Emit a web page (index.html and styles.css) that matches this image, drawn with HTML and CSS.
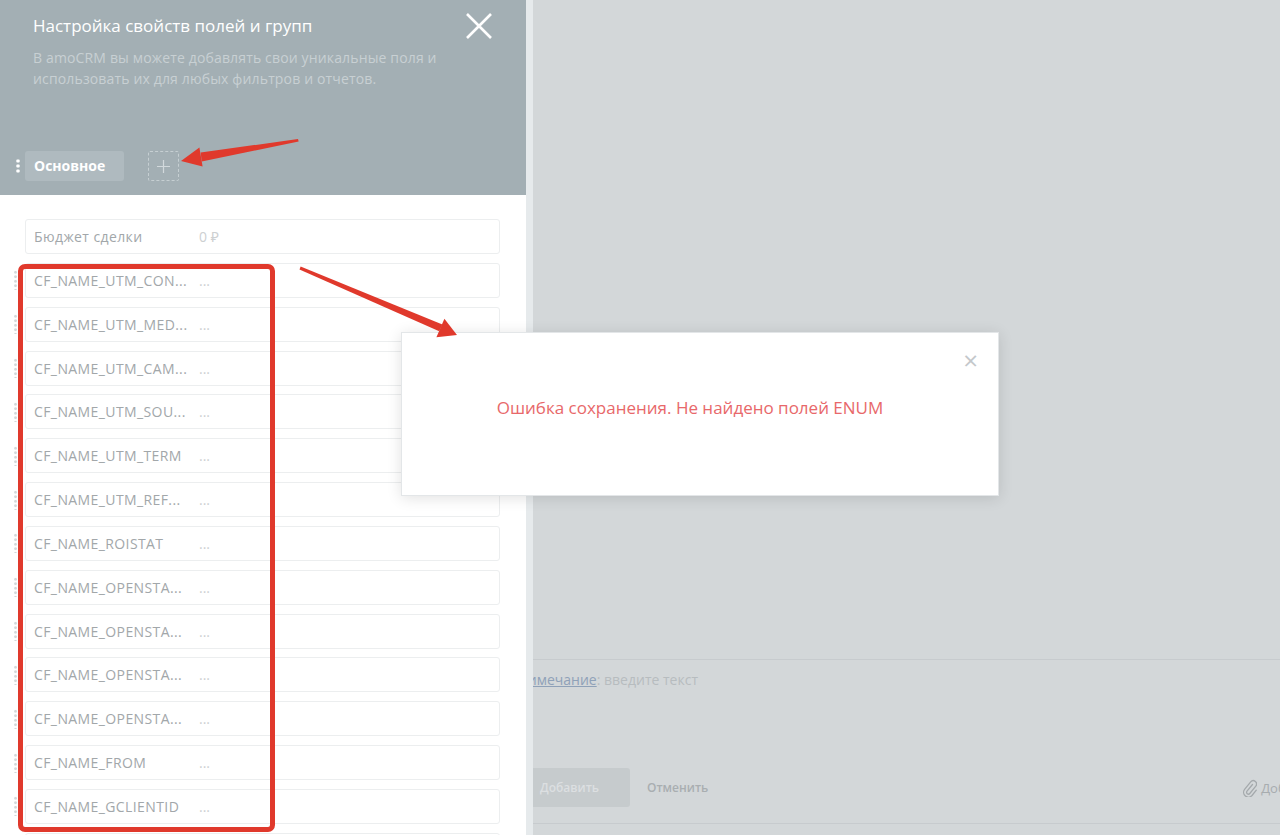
FILE: index.html
```html
<!DOCTYPE html>
<html lang="ru">
<head>
    <meta charset="UTF-8">
    <meta name="viewport" content="width=device-width, initial-scale=1.0">
    <title>Настройка свойств полей и групп</title>
    <link rel="stylesheet" href="styles.css">
</head>
<body>
    <div class="layout">
        <aside class="panel">
            <div class="panel-head">
                <div class="head-top">
                    <h1>Настройка свойств полей и групп</h1>
                    <button class="close" type="button" aria-label="Закрыть">
                        <svg width="26" height="26" viewBox="0 0 26 26"><path d="M1 1L25 25M25 1L1 25" stroke="#fff" stroke-width="2.6"/></svg>
                    </button>
                </div>
                <p class="lead">В amoCRM вы можете добавлять свои уникальные поля и использовать их для любых фильтров и отчетов.</p>
                <div class="tabs">
                    <span class="tab-dots"></span>
                    <span class="tab">Основное</span>
                    <span class="tab-add">
                        <svg width="13" height="13" viewBox="0 0 13 13"><path d="M6.5 0V13M0 6.5H13" stroke="#d2d9dc" stroke-width="1.2"/></svg>
                    </span>
                </div>
            </div>

            <div class="fields">
                <div class="field">
                    <span class="grip hidden"></span>
                    <div class="field-box"><span class="field-name">Бюджет сделки</span><span class="field-value">0 ₽</span></div>
                </div>
                <div class="field">
                    <span class="grip"></span>
                    <div class="field-box"><span class="field-name">CF_NAME_UTM_CON...</span><span class="field-value">...</span></div>
                </div>
                <div class="field">
                    <span class="grip"></span>
                    <div class="field-box"><span class="field-name">CF_NAME_UTM_MED...</span><span class="field-value">...</span></div>
                </div>
                <div class="field">
                    <span class="grip"></span>
                    <div class="field-box"><span class="field-name">CF_NAME_UTM_CAM...</span><span class="field-value">...</span></div>
                </div>
                <div class="field">
                    <span class="grip"></span>
                    <div class="field-box"><span class="field-name">CF_NAME_UTM_SOU...</span><span class="field-value">...</span></div>
                </div>
                <div class="field">
                    <span class="grip"></span>
                    <div class="field-box"><span class="field-name">CF_NAME_UTM_TERM</span><span class="field-value">...</span></div>
                </div>
                <div class="field">
                    <span class="grip"></span>
                    <div class="field-box"><span class="field-name">CF_NAME_UTM_REF...</span><span class="field-value">...</span></div>
                </div>
                <div class="field">
                    <span class="grip"></span>
                    <div class="field-box"><span class="field-name">CF_NAME_ROISTAT</span><span class="field-value">...</span></div>
                </div>
                <div class="field">
                    <span class="grip"></span>
                    <div class="field-box"><span class="field-name">CF_NAME_OPENSTA...</span><span class="field-value">...</span></div>
                </div>
                <div class="field">
                    <span class="grip"></span>
                    <div class="field-box"><span class="field-name">CF_NAME_OPENSTA...</span><span class="field-value">...</span></div>
                </div>
                <div class="field">
                    <span class="grip"></span>
                    <div class="field-box"><span class="field-name">CF_NAME_OPENSTA...</span><span class="field-value">...</span></div>
                </div>
                <div class="field">
                    <span class="grip"></span>
                    <div class="field-box"><span class="field-name">CF_NAME_OPENSTA...</span><span class="field-value">...</span></div>
                </div>
                <div class="field">
                    <span class="grip"></span>
                    <div class="field-box"><span class="field-name">CF_NAME_FROM</span><span class="field-value">...</span></div>
                </div>
                <div class="field">
                    <span class="grip"></span>
                    <div class="field-box"><span class="field-name">CF_NAME_GCLIENTID</span><span class="field-value">...</span></div>
                </div>
                <div class="field">
                    <span class="grip"></span>
                    <div class="field-box"></div>
                </div>
            </div>
        </aside>

        <div class="divider"></div>

        <main class="page">
            <div class="page-main"></div>
            <div class="note">
                <p class="note-text"><a href="#">Примечание</a>: <span>введите текст</span></p>
                <div class="note-actions">
                    <button class="btn-add" type="button">Добавить</button>
                    <button class="btn-cancel" type="button">Отменить</button>
                    <span class="attach">
                        <svg width="15" height="18" viewBox="0 0 15 18"><path d="M10.5 5.5L5 12.2a1.8 1.8 0 0 0 2.8 2.3l6-7.4a3.3 3.3 0 0 0-5.1-4.2L2.6 10.4a4.8 4.8 0 0 0 7.4 6.1l4.3-5.3" fill="none" stroke="#a4a9ac" stroke-width="1.3" stroke-linecap="round"/></svg>
                        Добавить файл
                    </span>
                </div>
            </div>
            <div class="page-foot"></div>
        </main>
    </div>

    <div class="modal">
        <div class="modal-top">
            <span class="modal-close">×</span>
        </div>
        <p class="modal-message">Ошибка сохранения. Не найдено полей ENUM</p>
    </div>

    <!-- annotations drawn over the screenshot -->
    <div class="frame"></div>
    <svg class="arrows" width="1280" height="835" viewBox="0 0 1280 835">
        <polygon points="298,139 298.6,141.6 201.7,161.4 200.7,152.6" fill="#e0392c"/>
        <polygon points="181,161 202.6,166.4 199.4,147.6" fill="#e0392c"/>
        <polygon points="300.6,266.6 299.5,269.4 439.2,331.2 442.4,324.4" fill="#e0392c"/>
        <polygon points="457,335 436.4,337.2 444.4,318.8" fill="#e0392c"/>
    </svg>
</body>
</html>
```

FILE: styles.css
```css
* {
    box-sizing: border-box;
}

body {
    margin: 0;
    height: 835px;
    overflow: hidden;
    font-family: "Open Sans", "Noto Sans", sans-serif;
    background: #d3d7d9;
}

.layout {
    display: flex;
    height: 835px;
}

/* left panel */

.panel {
    width: 526px;
    flex-shrink: 0;
    display: flex;
    flex-direction: column;
    background: #fff;
    overflow: hidden;
}

.panel-head {
    height: 195px;
    flex-shrink: 0;
    background: #a3afb4;
    padding: 12px 34px 14px 33px;
    display: flex;
    flex-direction: column;
}

.head-top {
    display: flex;
    justify-content: space-between;
    align-items: flex-start;
}

h1 {
    margin: 0;
    font-size: 17px;
    font-weight: 400;
    line-height: 28px;
    color: #fff;
}

.close {
    background: none;
    border: none;
    padding: 0;
    margin-top: 1px;
    width: 26px;
    height: 26px;
    cursor: pointer;
}

.lead {
    margin: 7px 0 0;
    max-width: 420px;
    font-size: 14px;
    line-height: 21px;
    letter-spacing: 0.15px;
    color: #c8d0d3;
}

.tabs {
    margin-top: auto;
    margin-left: -17px;
    display: flex;
    align-items: center;
    height: 30px;
}

.tab-dots {
    width: 4px;
    height: 14px;
    margin-right: 5px;
    background-image: radial-gradient(circle, #fff 1.6px, transparent 1.9px);
    background-size: 4px 5px;
    background-position: 0 -0.5px;
}

.tab {
    width: 99px;
    height: 30px;
    padding-left: 9px;
    border-radius: 3px;
    background: #afbabf;
    color: #fff;
    font-size: 14px;
    font-weight: 700;
    line-height: 30px;
}

.tab-add {
    width: 31px;
    height: 30px;
    margin-left: 24px;
    border: 1px dashed #c6cfd2;
    border-radius: 2px;
    display: flex;
    align-items: center;
    justify-content: center;
}

.fields {
    flex-shrink: 0;
    padding: 24px 26px 0 14px;
    display: flex;
    flex-direction: column;
    gap: 8.85px;
}

.field {
    display: flex;
    align-items: center;
}

.grip {
    width: 3px;
    height: 20px;
    margin-right: 8px;
    background-image: radial-gradient(circle, #d3d7d9 1.2px, transparent 1.5px);
    background-size: 3px 4.5px;
}

.grip.hidden {
    visibility: hidden;
}

.field-box {
    flex: 1;
    height: 35px;
    display: flex;
    align-items: center;
    padding-left: 8px;
    border: 1px solid #eceeef;
    border-radius: 3px;
    font-size: 14px;
}

.field-name {
    width: 165px;
    color: #a2a7aa;
    letter-spacing: 0.4px;
    white-space: nowrap;
}

.field-value {
    color: #cdd0d2;
}

.divider {
    width: 7px;
    flex-shrink: 0;
    background: #e6eaec;
}

/* page behind the panel */

.page {
    flex: 1;
    display: flex;
    flex-direction: column;
    overflow: hidden;
}

.page-main {
    flex: 1;
}

.note {
    height: 164px;
    border-top: 1px solid #c7cbce;
    padding: 10px 0 16px;
    display: flex;
    flex-direction: column;
}

.note-text {
    margin: 0 0 0 -24px;
    font-size: 14px;
    line-height: 20px;
    color: #b7bcbf;
}

.note-text a {
    color: #8fa1b8;
}

.note-actions {
    margin-top: auto;
    display: flex;
    align-items: center;
    height: 39px;
}

.btn-add {
    margin-left: -14px;
    width: 111px;
    height: 39px;
    padding: 0 0 0 21px;
    text-align: left;
    border: none;
    border-radius: 3px;
    background: #c6cbcd;
    color: #dcdfe1;
    font-family: inherit;
    font-size: 12px;
    font-weight: 600;
}

.btn-cancel {
    margin-left: 17px;
    padding: 0;
    border: none;
    background: none;
    color: #a9aeb1;
    font-family: inherit;
    font-size: 12px;
    font-weight: 600;
}

.attach {
    margin-left: auto;
    margin-right: -78px;
    display: flex;
    align-items: center;
    gap: 4px;
    color: #a7acaf;
    font-size: 13px;
    white-space: nowrap;
}

.page-foot {
    height: 12px;
    border-top: 1px solid #c7cbce;
}

/* error popup */

.modal {
    position: absolute;
    left: 401px;
    top: 332px;
    width: 598px;
    height: 164px;
    background: #fff;
    border: 1px solid #e3e6e8;
    box-shadow: 0 2px 14px rgba(0, 0, 0, 0.12);
    padding: 14px 20px 0;
}

.modal-top {
    display: flex;
    justify-content: flex-end;
}

.modal-close {
    font-size: 26px;
    line-height: 26px;
    color: #c4c8cb;
}

.modal-message {
    margin: 23px 0 0;
    padding-right: 20px;
    text-align: center;
    font-size: 17px;
    color: #e8686a;
}

/* annotations */

.frame {
    position: absolute;
    left: 18px;
    top: 264px;
    width: 257px;
    height: 568px;
    border: 5px solid #e0392c;
    border-radius: 7px;
}

.arrows {
    position: absolute;
    left: 0;
    top: 0;
    pointer-events: none;
}
```
